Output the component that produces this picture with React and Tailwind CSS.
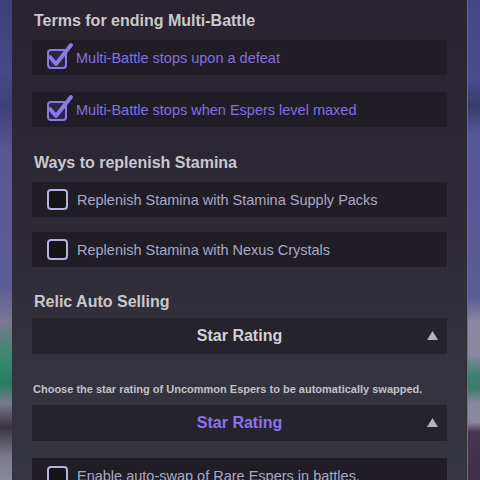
import React from "react";

function CheckedBox() {
  return (
    <span className="relative w-[20px] h-[20px] shrink-0 mt-[2px]">
      <span className="absolute inset-0 rounded-[4px] border-[2.5px] border-[#8a7ae6] bg-[#2c2548]" />
      <svg className="absolute left-[-2px] top-[-7px]" width="30" height="30" viewBox="0 0 30 30">
        <path d="M5 15 L11 22 L26 3" fill="none" stroke="#8a7ae6" strokeWidth="4" strokeLinecap="round" strokeLinejoin="round" />
      </svg>
    </span>
  );
}

function EmptyBox() {
  return <span className="w-[21px] h-[21px] shrink-0 rounded-[4px] border-2 border-[#b4b2de] bg-[#141318]" />;
}

function Row({ checked, children, className = "" }) {
  return (
    <div className={"shrink-0 flex pl-[15px] gap-[9px] bg-[#211d26] " + className}>
      {checked ? <CheckedBox /> : <EmptyBox />}
      <span className={"text-[14.5px] leading-[20px] " + (checked ? "text-[#8270e0]" : "text-[#a9a8c6]")}>{children}</span>
    </div>
  );
}

function Header({ children, className = "" }) {
  return <div className={"shrink-0 pl-[2px] text-[16px] leading-[18px] font-bold text-[#c9c8cc] " + className}>{children}</div>;
}

function Dropdown({ purple, className = "" }) {
  return (
    <div className={"shrink-0 relative h-[36px] flex items-center justify-center bg-[#25232b] " + className}>
      <span className={"text-[16px] font-bold " + (purple ? "text-[#8d72f2]" : "text-[#d2d1d6]")}>Star Rating</span>
      <svg className="absolute right-[9px] top-[13px]" width="11" height="9" viewBox="0 0 11 9">
        <path d="M5.5 0 L11 9 L0 9 Z" fill="#b4b3ba" />
      </svg>
    </div>
  );
}

export default function App() {
  return (
    <div className="w-[480px] h-[480px] flex overflow-hidden" style={{ fontFamily: '"Liberation Sans", Arial, sans-serif' }}>
      <div className="w-[12px] shrink-0 bg-[linear-gradient(to_bottom,#3e3e7e_0%,#48488a_15%,#3f3f78_22%,#5a5894_32%,#5e5c98_60%,#7a7892_67%,#2f8a68_76%,#2a7a60_80%,#7a7a8c_84%,#3a3440_89%,#7a7a8a_95%,#8a8a98_100%)]" />
      <div className="flex-1 flex flex-col overflow-hidden px-[20px] pt-[12px] bg-[linear-gradient(to_bottom,#29242f_0%,#2c2834_40%,#33323d_75%,#35353f_100%)]">
        <Header>Terms for ending Multi-Battle</Header>
        <Row checked className="mt-[10px] h-[35px] items-center">Multi-Battle stops upon a defeat</Row>
        <Row checked className="mt-[17px] h-[35px] items-center">Multi-Battle stops when Espers level maxed</Row>
        <Header className="mt-[27px]">Ways to replenish Stamina</Header>
        <Row className="mt-[10px] h-[35px] items-center">Replenish Stamina with Stamina Supply Packs</Row>
        <Row className="mt-[15px] h-[35px] items-center">Replenish Stamina with Nexus Crystals</Row>
        <Header className="mt-[26px]">Relic Auto Selling</Header>
        <Dropdown className="mt-[7px]" />
        <div className="shrink-0 mt-[29px] pl-[1px] text-[11px] leading-[12px] font-bold text-[#c2c1c8] whitespace-nowrap">
          Choose the star rating of Uncommon Espers to be automatically swapped.
        </div>
        <Dropdown purple className="mt-[10px]" />
        <Row className="mt-[17px] h-[40px] items-start pt-[8px]">Enable auto-swap of Rare Espers in battles.</Row>
      </div>
      <div className="w-[13px] shrink-0 border-l border-[#6a6a9a] bg-[linear-gradient(to_bottom,#46468a_0%,#4a4a8c_17%,#3a3a6c_22%,#58569a_28%,#5c5a98_62%,#8a88a0_67%,#8a88a0_74%,#3a8272_78%,#3e7a6c_81%,#8a88a0_84%,#8a88a0_88%,#4a3452_90%,#3e2e48_100%)]" />
    </div>
  );
}
